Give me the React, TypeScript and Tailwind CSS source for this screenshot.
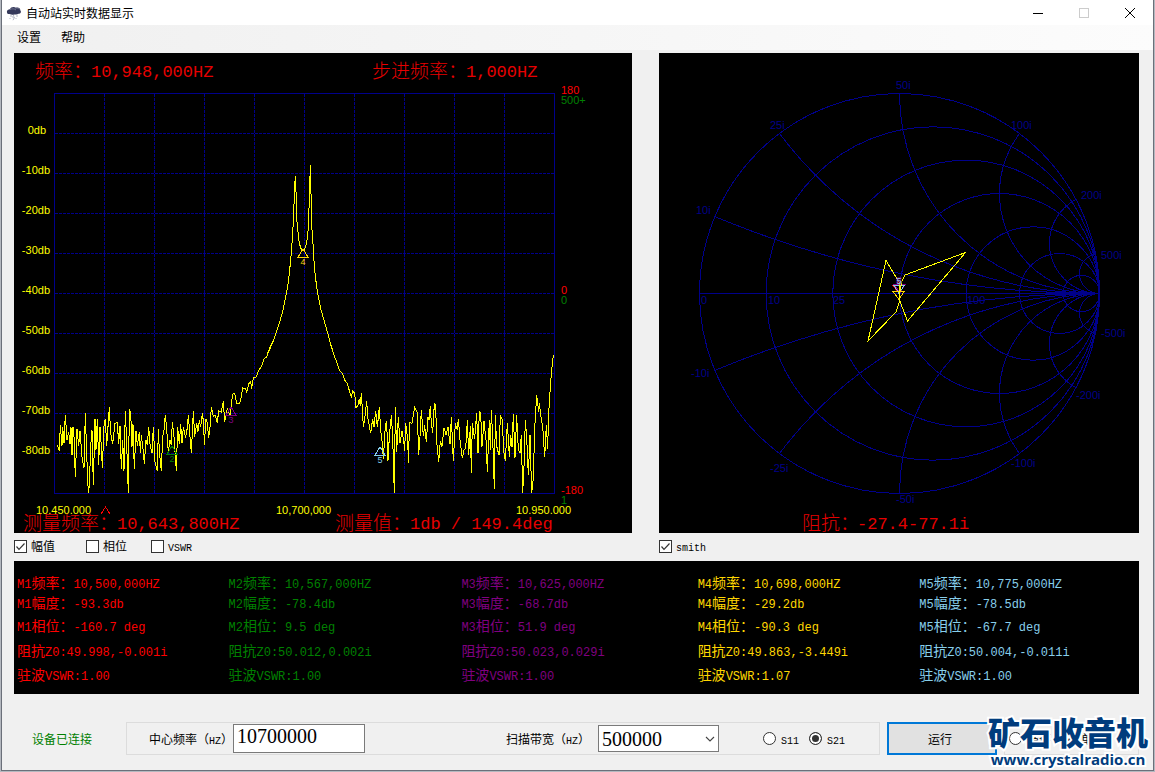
import { useState } from "react";
import clsx from "clsx";

const SONG = "font-['Noto_Sans_CJK_SC',sans-serif]";
const MONO = "font-['Liberation_Mono','Noto_Sans_CJK_SC',monospace]";

// Sweep trace, stored at three units per plot pixel
const TRACE_LEFT =
    "172,315 178,332 181,255 186,318 188,262 192,310 196,224 201,300 206,276 210,312 213,262 216,346 219,262 222,290 226,412 231,266 236,318 240,272 246,352 252,383 256,218 260,340 265,460 268,435 272,320 276,270 280,436 285,236 288,330 292,236 296,374 300,260 304,320 307,385 312,258 316,236 320,318 328,202 332,280 338,312 345,250 352,248 356,312 360,258 364,388 368,300 372,392 376,212 380,310 385,460 388,208 392,216 396,320 399,252 403,388 408,272 412,318 418,276 421,340 424,286 430,336 433,373 438,300 442,316 446,260 450,312 456,340 460,260 465,366 472,394 475,268 478,332 484,394 488,290 492,270 496,224 500,268 505,336 510,300 514,316 517,246 522,290 529,392 533,262 538,312 542,252 546,310 550,262 556,290 560,280 565,226 570,290 574,338 580,214 584,290 590,250 594,275 598,240 602,262 607,220 611,250 613,316 618,236 622,250 626,294 630,262 634,202 640,230 646,226 652,248 656,212 664,216 670,184 674,246 682,206 690,226 698,162 704,160 710,190 716,192 722,182 728,144 736,146 740,156 746,132 752,124 755,146 760,114 768,112 776,92 784,80 792,56 800,52 808,26 816,10 821,0";
const TRACE_PEAK =
    "142,610 148,600 158,578 166,554 174,530 182,506 190,476 198,436 203,410 208,370 212,330 216,280 218,255 221,190 224,110 226,78 229,150 231,215 235,255 238,280 243,296 250,302 257,290 262,266 265,230 268,150 271,45 273,130 275,230 278,260 281,320 285,370 290,410 296,446 302,476 310,504 318,532 326,560 332,584 338,600";
const TRACE_RIGHT =
    "88,0 96,28 104,50 112,72 118,90 128,102 136,124 142,130 148,152 154,170 158,154 164,160 168,202 174,196 178,176 181,198 184,158 190,260 194,238 200,184 204,236 212,280 218,236 222,262 227,212 232,262 238,202 242,270 247,310 250,358 256,256 260,244 264,362 268,290 274,226 278,290 283,460 286,202 290,336 295,230 300,310 306,274 311,300 314,334 317,248 322,290 326,368 328,246 336,250 344,202 352,218 356,346 360,290 364,210 370,288 374,256 379,306 384,232 387,240 391,198 394,250 398,278 403,192 407,196 410,306 416,366 421,302 426,320 432,264 438,284 444,262 450,312 454,232 460,362 466,250 472,270 475,236 480,300 487,354 492,330 497,326 502,240 506,346 511,258 514,398 517,250 524,296 530,218 534,340 538,214 542,220 546,320 552,244 558,300 562,396 568,240 571,330 574,210 578,290 583,448 586,224 590,318 597,346 601,226 606,236 612,340 616,364 622,248 628,350 632,286 636,322 640,222 645,354 650,226 655,330 660,340 664,286 668,460 672,380 676,240 680,290 685,406 690,284 695,460 700,414 704,268 710,164 716,216 718,190 724,240 728,256 734,352 739,256 743,326 746,220 750,156 754,100 757,74 760,46";

const TRACES = [
    { move: "translate(-14 287) scale(0.33333)", points: TRACE_LEFT },
    { move: "translate(206 97) scale(0.33333)", points: TRACE_PEAK },
    { move: "translate(286 287) scale(0.33333)", points: TRACE_RIGHT },
];

const MARKERS = [
    { color: "text-[#ff0000]", rows: ["M1频率：10,500,000HZ", "M1幅度：-93.3db", "M1相位：-160.7 deg", "阻抗Z0:49.998,-0.001i", "驻波VSWR:1.00"] },
    { color: "text-[#008000]", rows: ["M2频率：10,567,000HZ", "M2幅度：-78.4db", "M2相位：9.5 deg", "阻抗Z0:50.012,0.002i", "驻波VSWR:1.00"] },
    { color: "text-[#800080]", rows: ["M3频率：10,625,000HZ", "M3幅度：-68.7db", "M3相位：51.9 deg", "阻抗Z0:50.023,0.029i", "驻波VSWR:1.00"] },
    { color: "text-[#ffd700]", rows: ["M4频率：10,698,000HZ", "M4幅度：-29.2db", "M4相位：-90.3 deg", "阻抗Z0:49.863,-3.449i", "驻波VSWR:1.07"] },
    { color: "text-[#87ceeb]", rows: ["M5频率：10,775,000HZ", "M5幅度：-78.5db", "M5相位：-67.7 deg", "阻抗Z0:50.004,-0.011i", "驻波VSWR:1.00"] },
];

const ROW_HEIGHTS = ["h-5", "h-5", "h-[26px]", "h-6", "h-6"];

// Half-width runs are set in the mono face, one size below the Chinese text
function Mixed({ text, latin }: { text: string; latin: string }) {
    return <>
        {text.split(/([\x20-\x7e]+)/).map((part, index) =>
            index % 2 ? <span key={index} className={clsx(MONO, latin)}>{part}</span> : part
        )}
    </>
}

function CheckBox({ label, checked = false, className }: { label: string; checked?: boolean; className?: string }) {
    const [on, setOn] = useState<boolean>(checked);

    return <label className={clsx("flex items-center gap-1 text-[12px] leading-4 text-black", SONG, className)}>
        <span className="grid size-[13px] shrink-0">
            <input
                type="checkbox"
                checked={on}
                onChange={() => setOn(!on)}
                className="col-start-1 row-start-1 size-[13px] appearance-none border border-[#333333] bg-white"
            />
            {on && <svg viewBox="0 0 13 13" className="pointer-events-none col-start-1 row-start-1 size-[13px]">
                <path d="M2.5 6.5 L5 9.3 L10.5 3.5" fill="none" stroke="#333333" strokeWidth="1.2" />
            </svg>}
        </span>
        <span><Mixed text={label} latin="text-[10px] leading-none" /></span>
    </label>
}

function Radio({ name, label, checked = false }: { name: string; label: string; checked?: boolean }) {
    return <label className={clsx("flex items-center gap-[5px] text-[12px] leading-4 text-black", SONG)}>
        <input
            type="radio"
            name={name}
            defaultChecked={checked}
            className="size-[13px] shrink-0 appearance-none rounded-full border border-[#333333] bg-white checked:bg-[#333333] checked:shadow-[inset_0_0_0_2px_white]"
        />
        <span><Mixed text={label} latin="text-[10px] leading-none" /></span>
    </label>
}

function Readout({ x, y, valueX, label, value }: { x: number; y: number; valueX: number; label: string; value: string }) {
    return <g fill="#e60000">
        <text x={x} y={y} className={clsx(SONG, "text-[19px] font-light")}>{label}</text>
        <text x={valueX} y={y - 1} className={clsx(MONO, "text-[17px] whitespace-pre")}>{value}</text>
    </g>
}

function PlotMarker({ x, y, color, name }: { x: number; y: number; color: string; name: string }) {
    return <g>
        <path d={`M${x} ${y} l5 8 h-10 z`} fill="none" stroke={color} shapeRendering="crispEdges" />
        <text x={x} y={y + 16} fill={color} textAnchor="middle" className="text-[9px]">{name}</text>
    </g>
}

function SweepChart() {
    const columns = [1, 2, 3, 4, 5, 6, 7, 8, 9];
    const levels = [0, 1, 2, 3, 4, 5, 6, 7, 8];

    return <svg viewBox="0 0 618 480" className="block w-full overflow-visible bg-black font-['Liberation_Sans',sans-serif] text-[11px]">
        <g stroke="#00008b" fill="none" shapeRendering="crispEdges">
            {columns.map((c) => <line key={c} x1={40.5 + c * 50} x2={40.5 + c * 50} y1="41" y2="440" strokeDasharray="3 1" />)}
            {levels.map((l) => <line key={l} x1="41" x2="540" y1={80.5 + l * 40} y2={80.5 + l * 40} strokeDasharray="3 1" />)}
            <rect x="40.5" y="40.5" width="500" height="400" />
        </g>

        <g fill="#ffff00">
            {levels.map((l) => <text key={l} x={l ? 36 : 32} y={81 + l * 40} textAnchor="end">{l ? `-${l}0db` : "0db"}</text>)}
            <text x="22" y="461">10.450.000</text>
            <text x="262" y="461">10,700,000</text>
            <text x="502" y="461">10.950.000</text>
        </g>

        <g fill="#ff0000">
            <text x="547" y="41">180</text>
            <text x="547" y="241">0</text>
            <text x="547" y="441">-180</text>
        </g>
        <g fill="#008000">
            <text x="547" y="51">500+</text>
            <text x="547" y="251">0</text>
            <text x="547" y="451">1</text>
        </g>

        {TRACES.map((t) => (
            <polyline
                key={t.move}
                points={t.points}
                transform={t.move}
                fill="none"
                stroke="#ffff00"
                vectorEffect="non-scaling-stroke"
                shapeRendering="crispEdges"
            />
        ))}
        <PlotMarker x={158} y={393} color="#008000" name="2" />
        <PlotMarker x={217} y={354} color="#800080" name="3" />
        <PlotMarker x={289} y={196} color="#ffd700" name="4" />
        <PlotMarker x={366} y={394} color="#87ceeb" name="5" />
        <path d="M87 461 L91.5 454 L96 461" fill="none" stroke="#ff0000" shapeRendering="crispEdges" />

        <Readout x={21} y={25} valueX={77} label="频率：" value="10,948,000HZ" />
        <Readout x={358} y={25} valueX={452} label="步进频率：" value="1,000HZ" />
        <Readout x={9} y={477} valueX={103} label="测量频率：" value="10,643,800HZ" />
        <Readout x={321} y={477} valueX={396} label="测量值：" value="1db / 149.4deg" />
    </svg>
}

function SmithChart() {
    const steps = [0.2, 0.5, 1, 2, 4, 10];
    const labels: Array<[string, number, number]> = [
        ["50i", 237, 36], ["25i", 111, 76], ["10i", 37, 161], ["100i", 352, 76], ["200i", 422, 146], ["500i", 442, 206],
        ["0", 42, 251], ["10", 109, 251], ["25", 174, 251], ["100", 308, 251],
        ["-10i", 32, 324], ["-25i", 111, 419], ["-50i", 237, 450], ["-100i", 352, 414], ["-200i", 417, 346], ["-500i", 442, 284],
    ];

    return <svg viewBox="0 0 480 480" className="block w-full overflow-visible bg-black font-['Liberation_Sans',sans-serif] text-[11px]">
        <clipPath id="smith-edge"><circle cx="240.5" cy="240.5" r="200" /></clipPath>
        <g stroke="#00008b" fill="none" shapeRendering="crispEdges">
            <circle cx="240.5" cy="240.5" r="200" />
            <line x1="40" x2="441" y1="240.5" y2="240.5" />
            {steps.map((s) => <circle key={s} cx={440.5 - 200 / (1 + s)} cy="240.5" r={200 / (1 + s)} />)}
            <g clipPath="url(#smith-edge)">
                {steps.map((s) => <circle key={s} cx="440.5" cy={240.5 - 200 / s} r={200 / s} />)}
                {steps.map((s) => <circle key={s} cx="440.5" cy={240.5 + 200 / s} r={200 / s} />)}
            </g>
            <line x1="387" x2="436" y1="240.5" y2="240.5" strokeWidth="3" />
            <line x1="440" x2="440" y1="228" y2="254" strokeWidth="2" />
        </g>
        <g fill="#00008b">
            {labels.map(([text, x, y]) => <text key={text} x={x} y={y}>{text}</text>)}
        </g>
        <g fill="none" shapeRendering="crispEdges">
            <path d="M234 232.5 h11 l-5 8 z" stroke="#ff0000" />
            <path d="M235 231.5 h11 l-5 8 z" stroke="#800080" />
            <path d="M235 232.5 h10 l-5 8 z" stroke="#87ceeb" />
            <path d="M234 238.5 h11 l-5 8 z" stroke="#ffd700" />
            <path
                d="M306.5 199.5 L246 222 L243 228 L240.5 240 L240.5 249 L237 259 L209 288 L227 207.5 L240.5 230 L240.5 247 L248.5 268 Z"
                stroke="#ffff00"
            />
        </g>
        <text x="240" y="231" textAnchor="middle" fill="#87ceeb" stroke="#800080" className="text-[9px] [paint-order:stroke_fill]">5</text>
        <Readout x={143} y={477} valueX={198} label="阻抗：" value="-27.4-77.1i" />
    </svg>
}

function TitleBar() {
    return <header className="flex h-[25px] items-center bg-white pl-1">
        <svg viewBox="0 0 16 16" className="mr-1 size-4">
            <path d="M1 7.5 C0.5 5 2.5 4.2 4 4.2 C4.6 2 8 1.2 10 2.8 C12.5 2 14.5 3.6 14.3 5.3 C16 7.5 14 9 12.5 8.8 C10 10 5 10 3.5 9 C2 9.2 1.2 8.6 1 7.5 Z" fill="#34385a" />
            <path d="M4 4.6 C6 3.4 8.5 3.6 10 5 M9.5 3.4 C11 2.8 12.5 3.2 13.4 4.4" fill="none" stroke="#7b7f9c" strokeWidth="0.8" />
            <path d="M5 10 v2 M8 9.8 l-1.4 2.4 h2 l-1.6 3 M11 10 v2 M4 13 v1 M10 13 v1" fill="none" stroke="#b3b6c4" strokeWidth="1" />
        </svg>
        <h1 className={clsx(SONG, "flex-1 text-[12px] leading-4 text-black")}>自动站实时数据显示</h1>
        <button aria-label="最小化" className="grid h-full w-[46px] place-items-center">
            <svg viewBox="0 0 10 10" className="size-[10px]"><path d="M0 5.5 h10" stroke="#000000" shapeRendering="crispEdges" /></svg>
        </button>
        <button aria-label="最大化" className="grid h-full w-[46px] place-items-center">
            <svg viewBox="0 0 10 10" className="size-[10px]"><rect x="0.5" y="0.5" width="9" height="9" fill="none" stroke="#cccccc" /></svg>
        </button>
        <button aria-label="关闭" className="grid h-full w-[46px] place-items-center">
            <svg viewBox="0 0 10 10" className="size-[10px]"><path d="M0 0 L10 10 M10 0 L0 10" stroke="#000000" /></svg>
        </button>
    </header>
}

function MarkerTable() {
    return <div className="bg-black pt-[11px] pb-2">
        <table className={clsx(SONG, "w-full table-fixed border-collapse text-[14px] leading-4")}>
            <colgroup>
                <col className="w-[18.8%]" />
                <col className="w-[20.7%]" />
                <col className="w-[21%]" />
                <col className="w-[19.7%]" />
                <col />
            </colgroup>
            <tbody>
                {ROW_HEIGHTS.map((height, row) => (
                    <tr key={row} className={height}>
                        {MARKERS.map((marker, index) => (
                            <td key={index} className={clsx("p-0 pl-[3px] align-middle whitespace-nowrap", marker.color)}>
                                <Mixed text={marker.rows[row]} latin="text-[12px] leading-none" />
                            </td>
                        ))}
                    </tr>
                ))}
            </tbody>
        </table>
    </div>
}

function ControlBar() {
    const [center, setCenter] = useState<string>("10700000");

    return <div className={clsx(SONG, "flex h-[33px] items-stretch text-[12px] leading-4 text-black")}>
        <p className="flex w-28 items-center pl-[18px] text-[#008000]">设备已连接</p>

        <div className="flex flex-1 items-center border border-[#dcdcdc] pr-[34px] pl-[22px]">
            <label htmlFor="center"><Mixed text="中心频率（HZ）" latin="text-[10px] leading-none" /></label>
            <input
                id="center"
                value={center}
                onChange={(e) => setCenter(e.target.value)}
                className="h-[29px] w-[132px] border border-[#7a7a7a] bg-white px-[3px] pb-1 font-['Liberation_Serif',serif] text-[20px] leading-6"
            />
            <label htmlFor="span" className="ml-auto"><Mixed text="扫描带宽（HZ）" latin="text-[10px] leading-none" /></label>
            <div className="ml-2 grid">
                <select
                    id="span"
                    defaultValue="500000"
                    className="col-start-1 row-start-1 h-[27px] w-[121px] appearance-none border border-[#7a7a7a] bg-white px-[3px] font-['Liberation_Serif',serif] text-[20px] leading-6"
                >
                    <option>500000</option>
                </select>
                <svg viewBox="0 0 10 6" className="pointer-events-none col-start-1 row-start-1 mr-1 h-[6px] w-[10px] self-center justify-self-end">
                    <path d="M1 1 L5 5 L9 1" fill="none" stroke="#444444" strokeWidth="1.1" />
                </svg>
            </div>
            <div className="ml-11 flex gap-[10px]">
                <Radio name="port" label="S11" />
                <Radio name="port" label="S21" checked />
            </div>
        </div>

        <button className="ml-[7px] w-[110px] border-2 border-[#0078d7] bg-[#e1e1e1] pr-1">运行</button>

        <div className="ml-[7px] flex w-[135px] items-center gap-3 border border-[#dcdcdc] pl-1">
            <Radio name="mode" label="循环" />
            <Radio name="mode" label="单次" checked />
        </div>
    </div>
}

function Watermark() {
    return <a
        href="#"
        className="absolute right-[7px] bottom-[3px] flex w-[160px] flex-col items-center whitespace-nowrap text-[#003c7d] [-webkit-text-stroke:4px_white] [paint-order:stroke_fill]"
    >
        <span className="font-['Noto_Sans_CJK_SC',sans-serif] text-[32px] leading-9 font-black">矿石收音机</span>
        <span className="font-['Open_Sans',sans-serif] text-[15px] leading-5 font-bold">www.crystalradio.cn</span>
    </a>
}

export default function App() {
    return <div className="relative bg-[#b4b8bf] pr-px pb-px pl-px">
        <div className="border-r border-b border-l border-[#6b707a] bg-[#f0f0f0]">
            <TitleBar />
            <nav className={clsx(SONG, "flex h-[25px] items-center gap-5 bg-linear-to-r from-[#f0f0f0] to-[#fcfcfc] pb-0.5 pl-[15px] text-[12px] leading-4 text-black")}>
                <button>设置</button>
                <button>帮助</button>
            </nav>

            <main className="pt-[3px] pr-[14px] pb-[15px] pl-3">
                <div className="grid grid-cols-[618fr_480fr] gap-[27px]">
                    <section>
                        <SweepChart />
                        <div className="flex h-7 items-center pb-0.5">
                            <CheckBox label="幅值" checked className="w-[72px]" />
                            <CheckBox label="相位" className="w-[65px]" />
                            <CheckBox label="VSWR" />
                        </div>
                    </section>
                    <section>
                        <SmithChart />
                        <div className="flex h-7 items-center pb-0.5">
                            <CheckBox label="smith" checked />
                        </div>
                    </section>
                </div>
                <MarkerTable />
                <div className="pt-7">
                    <ControlBar />
                </div>
            </main>
        </div>
        <Watermark />
    </div>
}
